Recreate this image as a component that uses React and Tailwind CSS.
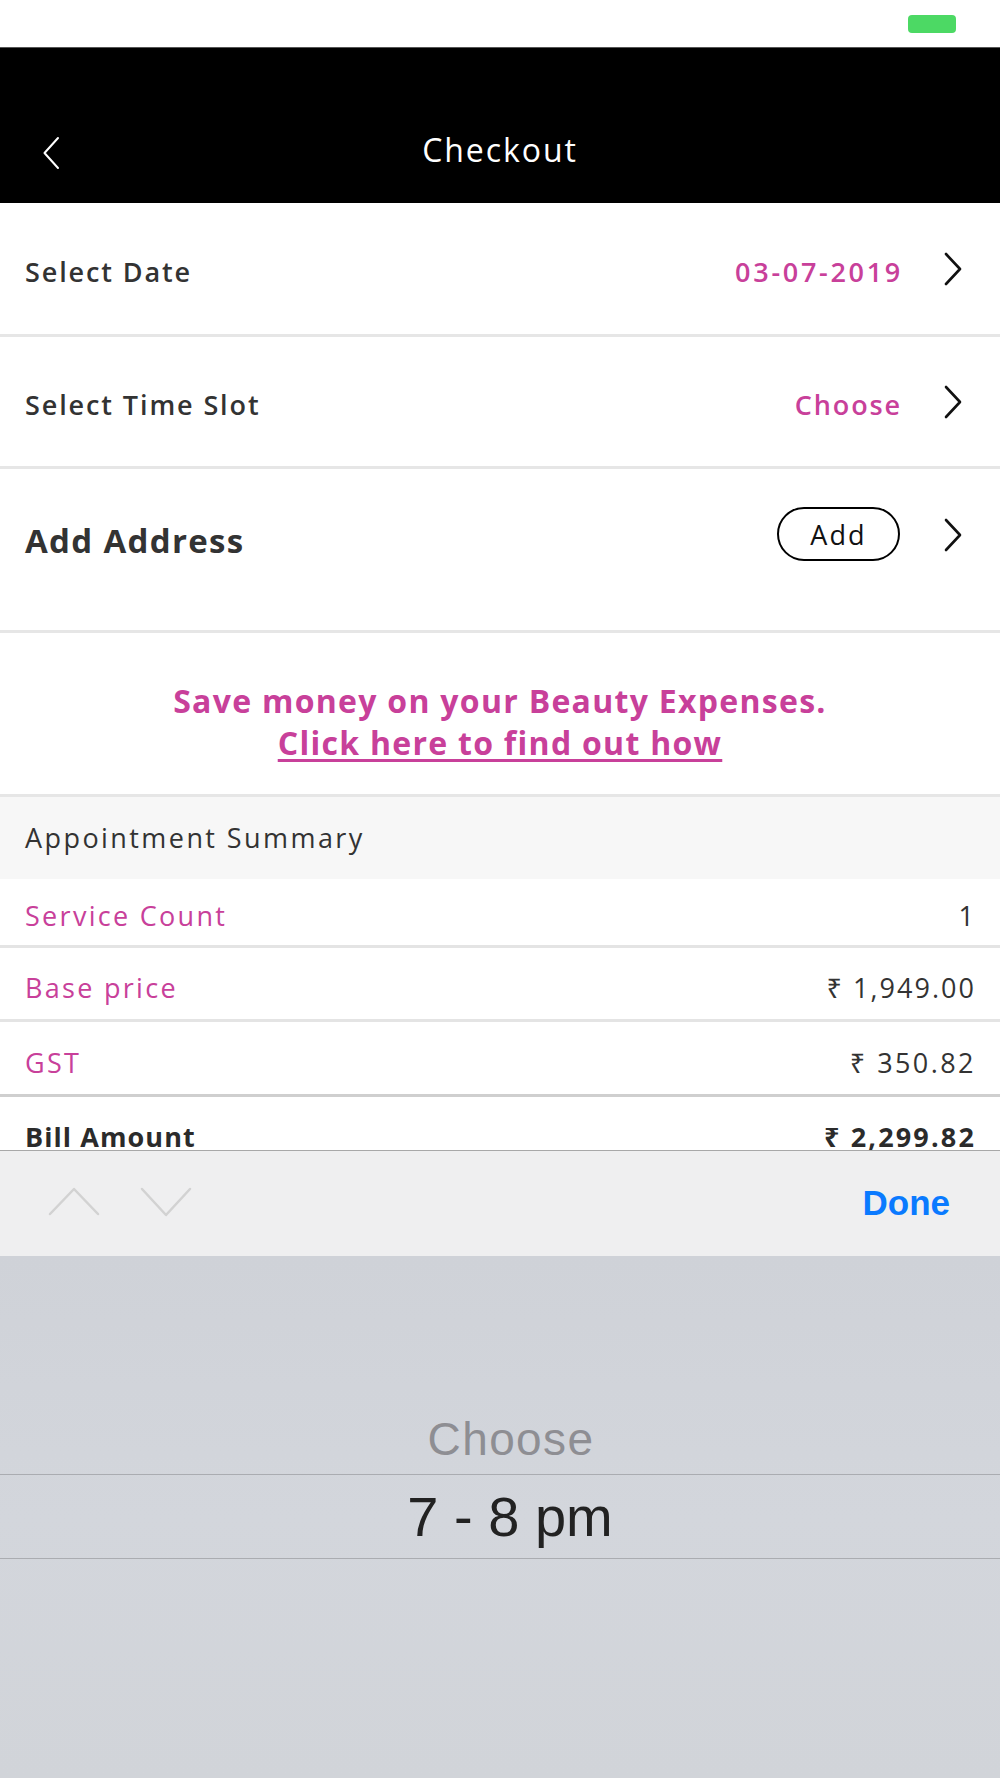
import React from "react";

const F = { fontFamily: '"Open Sans", "Noto Sans", sans-serif' };
const H = { fontFamily: '"Liberation Sans", Arial, sans-serif' };

function ChevronRight() {
  return (
    <svg width="20" height="34" viewBox="0 0 20 34" className="block">
      <path d="M3 2 L17 17 L3 32" fill="none" stroke="#111" strokeWidth="2.6" strokeLinecap="round" strokeLinejoin="round" />
    </svg>
  );
}

function Row({ label, right, className = "", labelClass = "", chevClass = "" }) {
  return (
    <div className={`flex items-center justify-between border-b-[3px] border-[#e6e6e6] pl-[25px] pr-[37px] ${className}`}>
      <span className={`text-[#333] leading-none ${labelClass}`}>{label}</span>
      <div className="flex items-center">
        {right}
        <div className={`ml-[43px] ${chevClass}`}>
          <ChevronRight />
        </div>
      </div>
    </div>
  );
}

function SumRow({ label, value, className = "", bold = false, border = "border-[#e4e4e4]", labelLs = "tracking-[0.085em]", valueLs = "tracking-[0.075em]" }) {
  return (
    <div className={`flex justify-between border-b-[3px] ${border} pl-[25px] pr-[26px] ${className}`}>
      <span className={bold ? `text-[27px] font-bold text-[#2b2b2b] ${labelLs}` : `text-[27px] font-medium text-[#c8409a] ${labelLs}`}>{label}</span>
      <span className={bold ? `text-[27px] font-bold text-[#2b2b2b] -mr-[2px] ${valueLs}` : `text-[27px] text-[#333] -mr-[2px] ${valueLs}`}>{value}</span>
    </div>
  );
}

export default function App() {
  return (
    <div className="w-[1000px] h-[1778px] overflow-hidden bg-white" style={F}>
      {/* status bar */}
      <div className="h-[48px] bg-white flex justify-end items-start pr-[44px] pt-[15px] border-b border-[#555]">
        <div className="w-[48px] h-[18px] rounded-[4px] bg-[#4cd964]" />
      </div>
      {/* header */}
      <div className="h-[155px] bg-black flex items-end">
        <div className="relative w-full h-[106px] flex items-center justify-center">
          <div className="absolute left-[43px] top-[39px]">
            <svg width="18" height="34" viewBox="0 0 18 34" className="block">
              <path d="M15 2 L1.5 17 L15 32" fill="none" stroke="#fff" strokeWidth="2" strokeLinecap="round" strokeLinejoin="round" />
            </svg>
          </div>
          <span className="text-white text-[32px] tracking-[0.06em] leading-none">Checkout</span>
        </div>
      </div>
      {/* content */}
      <div className="h-[947px] overflow-hidden">
        <Row
          className="h-[134px] pt-[6px]"
          labelClass="text-[27px] font-semibold tracking-[0.07em]"
          label="Select Date"
          right={<span className="text-[27px] leading-none font-semibold text-[#c8409a] tracking-[0.1em] -mr-[3px]">03-07-2019</span>}
          chevClass="-mt-[6px]"
        />
        <Row
          className="h-[132px] pt-[6px]"
          labelClass="text-[27px] font-semibold tracking-[0.07em]"
          label="Select Time Slot"
          right={<span className="text-[27px] leading-none font-semibold text-[#c8409a] tracking-[0.07em] -mr-[2px]">Choose</span>}
          chevClass="-mt-[6px]"
        />
        <Row
          className="h-[164px] pb-[19px]"
          labelClass="text-[33px] font-bold tracking-[0.04em]"
          label="Add Address"
          right={
            <div className="w-[123px] h-[54px] rounded-full border-2 border-black flex items-center justify-center text-[27px] leading-none tracking-[0.08em] text-[#111] -mt-[12px]">
              Add
            </div>
          }
          chevClass="-mt-[10px]"
        />
        <div className="h-[164px] border-b-[3px] border-[#e6e6e6] flex flex-col items-center justify-center pt-[16px] text-[#c8409a] text-[32px] font-bold leading-[42px] tracking-[0.04em]">
          <span>Save money on your Beauty Expenses.</span>
          <span className="underline underline-offset-[4px] decoration-[2.5px]">Click here to find out how</span>
        </div>
        <div className="h-[82px] bg-[#f7f7f7] flex items-center pl-[25px]">
          <span className="text-[27px] text-[#333] font-medium tracking-[0.09em]">Appointment Summary</span>
        </div>
        <SumRow className="h-[69px] items-center pt-[9px]" label="Service Count" value="1" />
        <SumRow className="h-[74px] items-center pt-[10px]" label="Base price" value="₹ 1,949.00" />
        <SumRow className="h-[75px] items-center pt-[10px]" label="GST" value="₹ 350.82" border="border-[#cfcfcf]" valueLs="tracking-[0.09em]" />
        <SumRow className="h-[80px] items-start pt-[20px]" label="Bill Amount" value="₹ 2,299.82" bold labelLs="tracking-[0.04em]" valueLs="tracking-[0.08em]" />
      </div>
      {/* keyboard toolbar */}
      <div className="h-[106px] bg-[#efeff0] border-t border-[#a8a8a8] flex items-center justify-between pl-[48px] pr-[50px]" style={H}>
        <div className="flex items-center gap-[40px] -mt-[4px]">
          <svg width="52" height="30" viewBox="0 0 52 30" className="block">
            <path d="M2 27 L26 2 L50 27" fill="none" stroke="#d2d2d2" strokeWidth="2.5" strokeLinecap="round" strokeLinejoin="round" />
          </svg>
          <svg width="52" height="30" viewBox="0 0 52 30" className="block">
            <path d="M2 2 L26 28 L50 2" fill="none" stroke="#d2d2d2" strokeWidth="2.5" strokeLinecap="round" strokeLinejoin="round" />
          </svg>
        </div>
        <span className="text-[35px] font-bold text-[#0a7aff]">Done</span>
      </div>
      {/* picker */}
      <div className="h-[522px] bg-gradient-to-b from-[#cfd2d8] via-[#d3d6dc] to-[#d1d4d9] flex flex-col" style={H}>
        <div className="h-[148px]" />
        <div className="h-[70px] flex items-center justify-center pl-[22px] text-[46px] tracking-[0.03em] text-[#8e8e93]">Choose</div>
        <div className="h-[85px] border-y border-[#aaacb1] flex items-center justify-center pl-[20px] text-[56px] text-[#222]">7 - 8 pm</div>
      </div>
    </div>
  );
}
